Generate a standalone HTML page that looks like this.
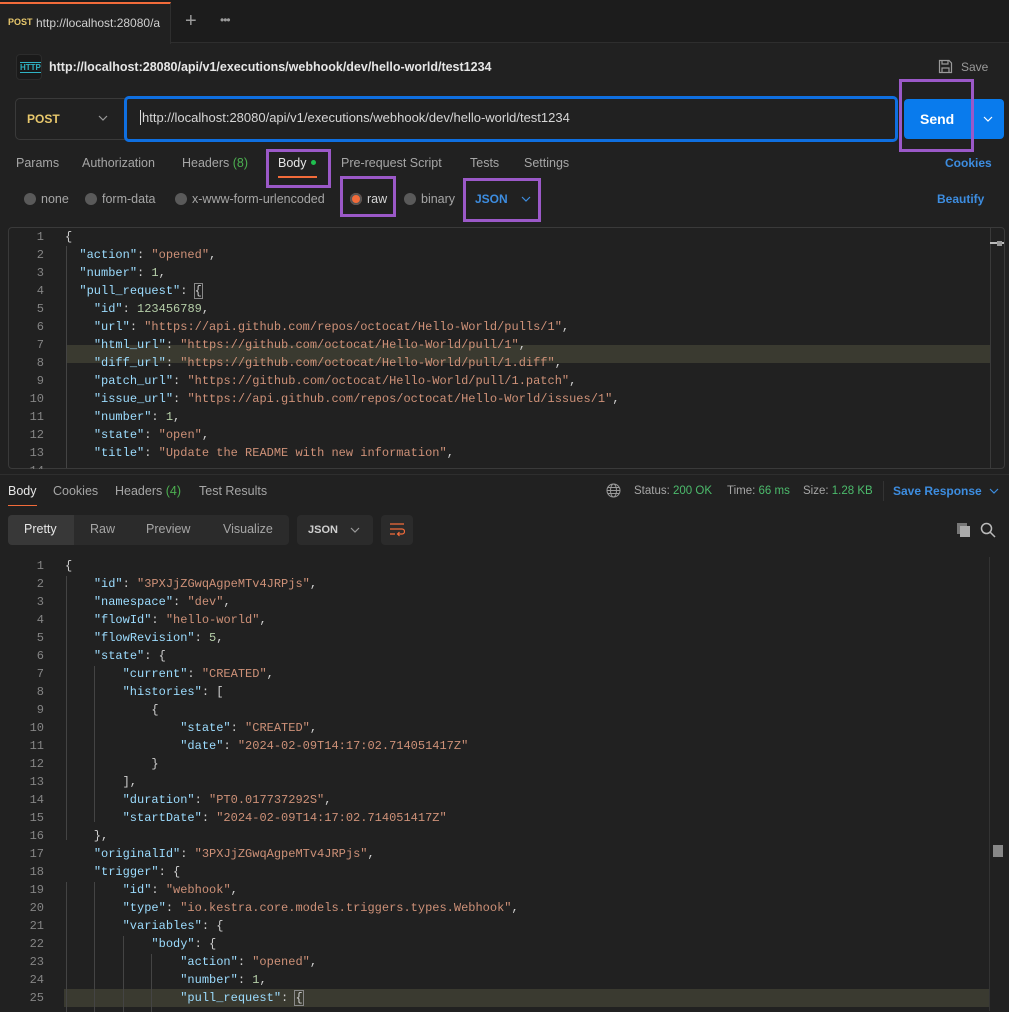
<!DOCTYPE html>
<html><head><meta charset="utf-8">
<style>
*{margin:0;padding:0;box-sizing:border-box}
body{width:1009px;height:1011px;background:#212121;font-family:"Liberation Sans",sans-serif;color:#a6a6a6;position:relative;overflow:hidden;font-size:12px}
.a{position:absolute;white-space:nowrap}
.code{font-family:"Liberation Mono",monospace;font-size:12px;line-height:18px;white-space:pre;color:#cfcfcf}
.ln{position:absolute;width:44px;text-align:right;color:#858585;font-family:"Liberation Mono",monospace;font-size:12px;line-height:18px;white-space:pre}
.k{color:#9cdcfe}.s{color:#ce9178}.n{color:#b5cea8}.d{color:#555}
.pb{position:absolute;border:3px solid #9b59c8}
.radio{display:inline-block;width:12px;height:12px;border-radius:50%;background:#5a5a5a;vertical-align:-2px;margin-right:5px}
.t{font-size:12.5px}
</style></head><body>
<!-- tab bar -->
<div class="a" style="left:0;top:0;width:1009px;height:43px;background:#1c1c1c;border-bottom:1px solid #2e2e2e"></div>
<div class="a" style="left:0;top:2px;width:171px;height:42px;background:#212121;border-top:2px solid #f26b3a;border-right:1px solid #2e2e2e"></div>
<div class="a" style="left:8px;top:17px;font-size:9px;font-weight:bold;color:#e8c86c">POST</div>
<div class="a" style="left:36px;top:16px;font-size:12px;color:#cfcfcf;width:126px;overflow:hidden">http://localhost:28080/a</div>
<div class="a" style="left:185px;top:10px;font-size:20px;color:#9a9a9a">+</div>
<div class="a" style="left:220px;top:13px;font-size:12px;color:#9a9a9a;letter-spacing:-1px">•••</div>
<!-- title -->
<div class="a" style="left:16px;top:54px;width:26px;height:26px;border-radius:4px;background:#1a1a1a;border:1px solid #2c2c2c"></div>
<div class="a" style="left:20px;top:62px;font-size:8px;font-weight:bold;color:#2fb3c4;border-top:1px solid #2fb3c4;border-bottom:1px solid #2fb3c4;line-height:9px">HTTP</div>
<div class="a" style="left:49px;top:60px;font-size:12.5px;font-weight:bold;color:#e6e6e6">http://localhost:28080/api/v1/executions/webhook/dev/hello-world/test1234</div>
<svg class="a" style="left:938px;top:59px" width="15" height="15" viewBox="0 0 15 15" fill="none" stroke="#9a9a9a" stroke-width="1.2"><path d="M1.5 1.5h9.5l2.5 2.5v9.5h-12z M4 1.5v3.5h6v-3.5 M4 13.5v-4.5h7v4.5"/></svg>
<div class="a" style="left:961px;top:60px;font-size:12px;color:#9a9a9a">Save</div>
<!-- url bar -->
<div class="a" style="left:15px;top:98px;width:112px;height:42px;border:1px solid #3a3a3a;border-radius:5px 0 0 5px"></div>
<div class="a" style="left:27px;top:112px;font-size:12px;font-weight:bold;color:#e8c86c">POST</div>
<svg class="a" style="left:98px;top:115px" width="10" height="7"><path d="M1 1l4 4 4-4" stroke="#9a9a9a" fill="none" stroke-width="1.2"/></svg>
<div class="a" style="left:124px;top:96px;width:774px;height:46px;border:3px solid #0f6fe0;border-radius:5px"></div>
<div class="a" style="left:140px;top:110px;font-size:13px;color:#d6d6d6;border-left:1px solid #ddd;padding-left:1px">http://localhost:28080/api/v1/executions/webhook/dev/hello-world/test1234</div>
<div class="a" style="left:904px;top:99px;width:100px;height:40px;background:#097bed;border-radius:4px"></div>
<div class="a" style="left:972px;top:99px;width:1px;height:40px;background:#2a66b8"></div>
<div class="a" style="left:920px;top:111px;font-size:14px;font-weight:bold;color:#fff">Send</div>
<svg class="a" style="left:983px;top:116px" width="10" height="7"><path d="M1 1l4 4 4-4" stroke="#fff" fill="none" stroke-width="1.2"/></svg>
<div class="pb" style="left:899px;top:79px;width:75px;height:73px"></div>
<!-- req tabs -->
<div class="a t" style="left:16px;top:156px">Params</div>
<div class="a t" style="left:82px;top:156px">Authorization</div>
<div class="a t" style="left:182px;top:156px">Headers <span style="color:#4caf50">(8)</span></div>
<div class="a t" style="left:278px;top:156px;color:#e6e6e6">Body</div>
<div class="a" style="left:311px;top:160px;width:5px;height:5px;border-radius:50%;background:#1fbf4f"></div>
<div class="a" style="left:278px;top:176px;width:39px;height:2px;background:#f26b3a"></div>
<div class="pb" style="left:266px;top:149px;width:65px;height:39px"></div>
<div class="a t" style="left:341px;top:156px">Pre-request Script</div>
<div class="a t" style="left:470px;top:156px">Tests</div>
<div class="a t" style="left:524px;top:156px">Settings</div>
<div class="a" style="left:945px;top:156px;font-size:12px;font-weight:bold;color:#3d8de0">Cookies</div>
<!-- body types -->
<div class="a t" style="left:24px;top:192px"><span class="radio"></span>none</div>
<div class="a t" style="left:85px;top:192px"><span class="radio"></span>form-data</div>
<div class="a t" style="left:175px;top:192px"><span class="radio"></span>x-www-form-urlencoded</div>
<div class="a t" style="left:350px;top:192px;color:#d6d6d6"><span class="radio" style="background:#f26b3a;box-shadow:0 0 0 2px #555 inset"></span>raw</div>
<div class="pb" style="left:340px;top:176px;width:56px;height:41px"></div>
<div class="a t" style="left:404px;top:192px"><span class="radio"></span>binary</div>
<div class="a" style="left:475px;top:192px;font-size:12px;font-weight:bold;color:#3d8de0">JSON</div>
<svg class="a" style="left:521px;top:196px" width="10" height="7"><path d="M1 1l4 4 4-4" stroke="#3d8de0" fill="none" stroke-width="1.2"/></svg>
<div class="pb" style="left:463px;top:178px;width:78px;height:44px"></div>
<div class="a" style="left:937px;top:192px;font-size:12px;font-weight:bold;color:#3d8de0">Beautify</div>
<!-- req editor -->
<div class="a" style="left:8px;top:227px;width:997px;height:242px;border:1px solid #3a3a3a;border-radius:4px;overflow:hidden">
 <div class="a" style="left:981px;top:0;width:1px;height:242px;background:#3a3a3a"></div>
 <div class="a" style="left:981px;top:14px;width:14px;height:2px;background:#bbb"></div>
 <div class="a" style="left:988px;top:13px;width:5px;height:5px;background:#999"></div>
 <div class="a" style="left:57px;top:117px;width:924px;height:18px;background:#3a3a30"></div>
 <div class="a" style="left:57px;top:18px;width:1px;height:230px;background:#444"></div>
</div>
<div class="ln" style="left:0;top:228px">1
2
3
4
5
6
7
8
9
10
11
12
13
14</div>
<div class="a code" style="left:65px;top:228px">{
  <span class="k">"action"</span>: <span class="s">"opened"</span>,
  <span class="k">"number"</span>: <span class="n">1</span>,
  <span class="k">"pull_request"</span>: <span style="outline:1px solid #888">{</span>
    <span class="k">"id"</span>: <span class="n">123456789</span>,
    <span class="k">"url"</span>: <span class="s">"https://api.github.com/repos/octocat/Hello-World/pulls/1"</span>,
    <span class="k">"html_url"</span>: <span class="s">"https://github.com/octocat/Hello-World/pull/1"</span>,
    <span class="k">"diff_url"</span>: <span class="s">"https://github.com/octocat/Hello-World/pull/1.diff"</span>,
    <span class="k">"patch_url"</span>: <span class="s">"https://github.com/octocat/Hello-World/pull/1.patch"</span>,
    <span class="k">"issue_url"</span>: <span class="s">"https://api.github.com/repos/octocat/Hello-World/issues/1"</span>,
    <span class="k">"number"</span>: <span class="n">1</span>,
    <span class="k">"state"</span>: <span class="s">"open"</span>,
    <span class="k">"title"</span>: <span class="s">"Update the README with new information"</span>,
</div>
<div class="a" style="left:0;top:469px;width:1009px;height:6px;background:#212121"></div>
<div class="a" style="left:0;top:474px;width:1009px;height:1px;background:#2e2e2e"></div>
<!-- response header -->
<div class="a t" style="left:8px;top:484px;color:#e6e6e6">Body</div>
<div class="a" style="left:8px;top:505px;width:29px;height:1px;background:#f26b3a"></div>
<div class="a t" style="left:53px;top:484px">Cookies</div>
<div class="a t" style="left:115px;top:484px">Headers <span style="color:#4caf50">(4)</span></div>
<div class="a t" style="left:199px;top:484px">Test Results</div>
<svg class="a" style="left:606px;top:483px" width="15" height="15" viewBox="0 0 15 15" fill="none" stroke="#9a9a9a" stroke-width="1"><circle cx="7.5" cy="7.5" r="6.5"/><ellipse cx="7.5" cy="7.5" rx="3" ry="6.5"/><path d="M1 7.5h13M2 4.5h11M2 10.5h11"/></svg>
<div class="a" style="left:634px;top:485px;font-size:11.5px">Status: <span style="color:#4cbb6c">200 OK</span></div>
<div class="a" style="left:727px;top:485px;font-size:11.5px">Time: <span style="color:#4cbb6c">66 ms</span></div>
<div class="a" style="left:803px;top:485px;font-size:11.5px">Size: <span style="color:#4cbb6c">1.28 KB</span></div>
<div class="a" style="left:883px;top:481px;width:1px;height:20px;background:#333"></div>
<div class="a" style="left:893px;top:484px;font-size:12px;font-weight:bold;color:#3d8de0">Save Response</div>
<svg class="a" style="left:989px;top:488px" width="10" height="7"><path d="M1 1l4 4 4-4" stroke="#3d8de0" fill="none" stroke-width="1.2"/></svg>
<!-- response toolbar -->
<div class="a" style="left:8px;top:515px;width:281px;height:30px;background:#2b2b2b;border-radius:4px"></div>
<div class="a" style="left:8px;top:515px;width:66px;height:30px;background:#383838;border-radius:4px 0 0 4px"></div>
<div class="a t" style="left:24px;top:522px;color:#e6e6e6">Pretty</div>
<div class="a t" style="left:90px;top:522px">Raw</div>
<div class="a t" style="left:146px;top:522px">Preview</div>
<div class="a t" style="left:223px;top:522px">Visualize</div>
<div class="a" style="left:297px;top:515px;width:76px;height:30px;background:#2b2b2b;border-radius:4px"></div>
<div class="a" style="left:308px;top:524px;font-size:11px;font-weight:bold;color:#cfcfcf">JSON</div>
<svg class="a" style="left:350px;top:527px" width="10" height="7"><path d="M1 1l4 4 4-4" stroke="#9a9a9a" fill="none" stroke-width="1.2"/></svg>
<div class="a" style="left:381px;top:515px;width:32px;height:30px;background:#2b2b2b;border-radius:4px"></div>
<svg class="a" style="left:389px;top:522px" width="16" height="16" viewBox="0 0 16 16" fill="none" stroke="#f26b3a" stroke-width="1.2"><path d="M1 2h14M1 7h12a2.5 2.5 0 0 1 0 5h-4M10.5 10l-2 2 2 2M1 12h5"/></svg>
<svg class="a" style="left:956px;top:522px" width="16" height="16" viewBox="0 0 16 16"><rect x="1" y="1" width="10" height="11" fill="#777"/><rect x="4" y="4" width="10" height="11" fill="#aaa"/></svg>
<svg class="a" style="left:980px;top:522px" width="16" height="16" viewBox="0 0 16 16" fill="none" stroke="#bbb" stroke-width="1.5"><circle cx="6.5" cy="6.5" r="5"/><path d="M10 10l5 5"/></svg>
<!-- response code -->
<div class="a" style="left:64px;top:989px;width:925px;height:18px;background:#3a3a30"></div>
<div class="a" style="left:989px;top:557px;width:1px;height:454px;background:#333"></div>
<div class="a" style="left:993px;top:845px;width:10px;height:12px;background:#888"></div>
<div class="a" style="left:66px;top:576px;width:1px;height:264px;background:#444"></div>
<div class="a" style="left:94px;top:666px;width:1px;height:156px;background:#444"></div>
<div class="a" style="left:66px;top:882px;width:1px;height:130px;background:#444"></div>
<div class="a" style="left:94px;top:882px;width:1px;height:130px;background:#444"></div>
<div class="a" style="left:123px;top:936px;width:1px;height:76px;background:#444"></div>
<div class="a" style="left:151px;top:954px;width:1px;height:58px;background:#444"></div>
<div class="ln" style="left:0;top:557px">1
2
3
4
5
6
7
8
9
10
11
12
13
14
15
16
17
18
19
20
21
22
23
24
25</div>
<div class="a code" style="left:65px;top:557px">{
    <span class="k">"id"</span>: <span class="s">"3PXJjZGwqAgpeMTv4JRPjs"</span>,
    <span class="k">"namespace"</span>: <span class="s">"dev"</span>,
    <span class="k">"flowId"</span>: <span class="s">"hello-world"</span>,
    <span class="k">"flowRevision"</span>: <span class="n">5</span>,
    <span class="k">"state"</span>: {
        <span class="k">"current"</span>: <span class="s">"CREATED"</span>,
        <span class="k">"histories"</span>: [
            {
                <span class="k">"state"</span>: <span class="s">"CREATED"</span>,
                <span class="k">"date"</span>: <span class="s">"2024-02-09T14:17:02.714051417Z"</span>
            }
        ],
        <span class="k">"duration"</span>: <span class="s">"PT0.017737292S"</span>,
        <span class="k">"startDate"</span>: <span class="s">"2024-02-09T14:17:02.714051417Z"</span>
    },
    <span class="k">"originalId"</span>: <span class="s">"3PXJjZGwqAgpeMTv4JRPjs"</span>,
    <span class="k">"trigger"</span>: {
        <span class="k">"id"</span>: <span class="s">"webhook"</span>,
        <span class="k">"type"</span>: <span class="s">"io.kestra.core.models.triggers.types.Webhook"</span>,
        <span class="k">"variables"</span>: {
            <span class="k">"body"</span>: {
                <span class="k">"action"</span>: <span class="s">"opened"</span>,
                <span class="k">"number"</span>: <span class="n">1</span>,
                <span class="k">"pull_request"</span>: <span style="outline:1px solid #888">{</span>
</div>
</body></html>
